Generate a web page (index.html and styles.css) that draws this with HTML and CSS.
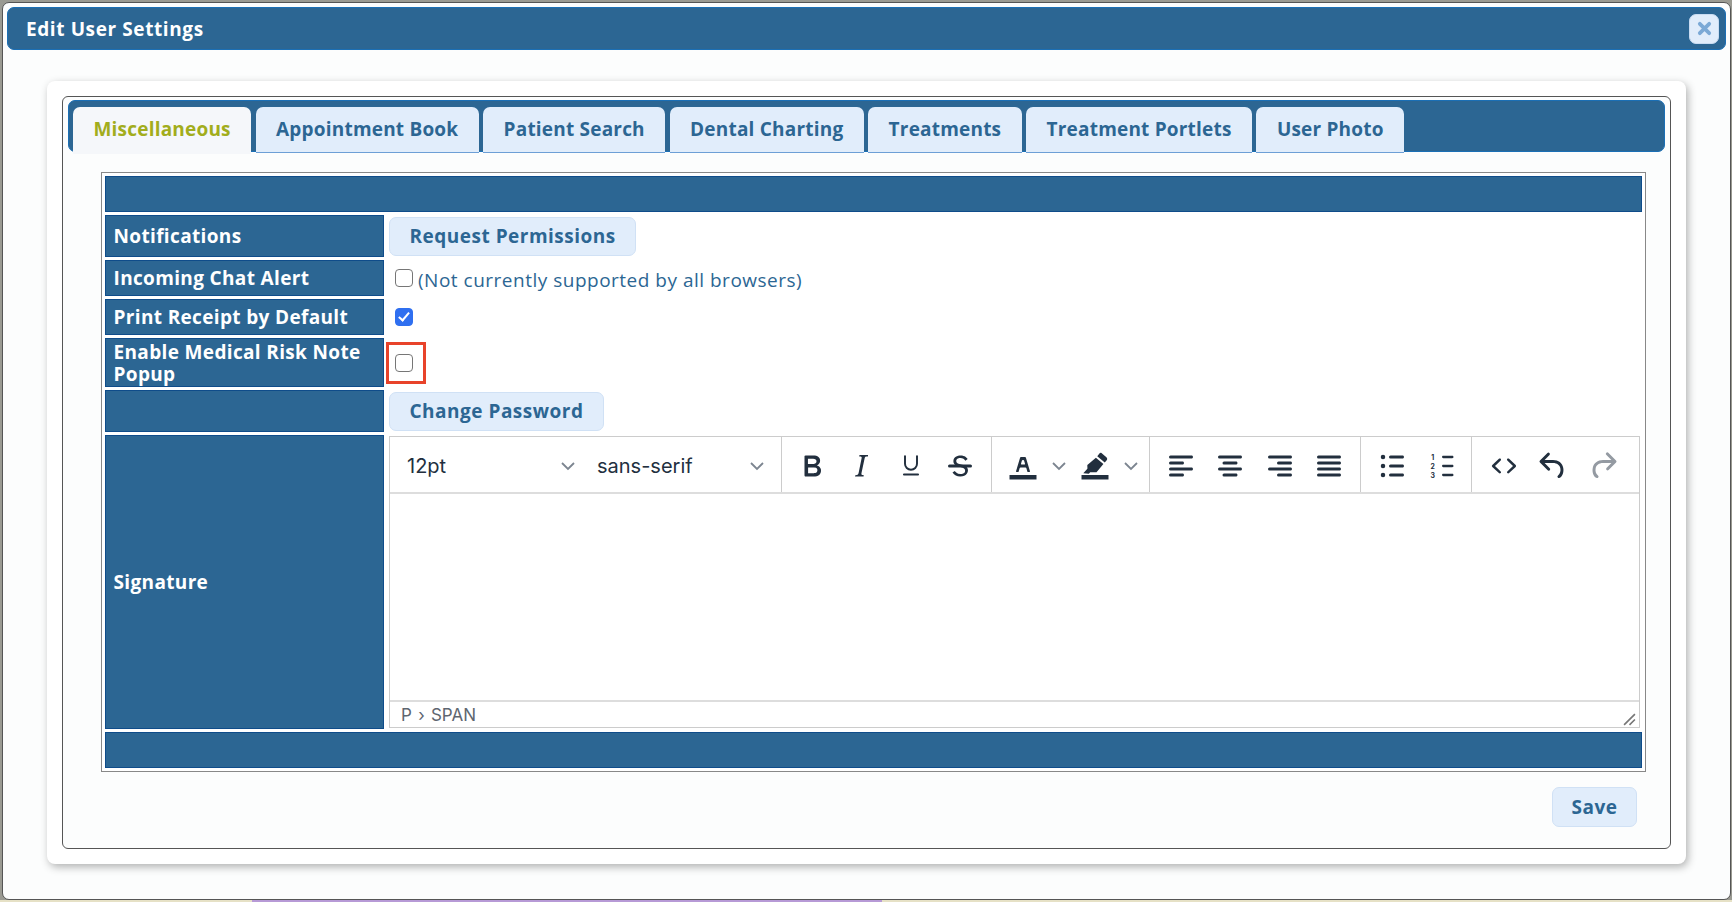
FILE: index.html
```html
<!DOCTYPE html>
<html lang="en">
<head>
<meta charset="utf-8">
<title>Edit User Settings</title>
<link rel="stylesheet" href="styles.css">
</head>
<body>
<div class="dialog">
  <div class="titlebar">
    <span class="title">Edit User Settings</span>
    <button class="close" aria-label="Close"><svg viewBox="0 0 16 16" width="15" height="15"><path d="M3 3l10 10M13 3L3 13" stroke="#7ba9d6" stroke-width="4" stroke-linecap="round"/></svg></button>
  </div>
  <div class="card">
    <div class="fieldset">
      <div class="tabbar">
        <a class="tab active">Miscellaneous</a>
        <a class="tab">Appointment Book</a>
        <a class="tab">Patient Search</a>
        <a class="tab">Dental Charting</a>
        <a class="tab">Treatments</a>
        <a class="tab">Treatment Portlets</a>
        <a class="tab">User Photo</a>
      </div>
      <table class="form">
        <colgroup><col class="col-label"><col></colgroup>
        <tr class="h36"><td class="head" colspan="2"></td></tr>
        <tr class="h42"><th>Notifications</th><td><button class="btn">Request Permissions</button></td></tr>
        <tr class="h36"><th>Incoming Chat Alert</th><td><label class="check"><input type="checkbox"><span class="note">(Not currently supported by all browsers)</span></label></td></tr>
        <tr class="h36"><th>Print Receipt by Default</th><td><label class="check"><input type="checkbox" checked></label></td></tr>
        <tr class="h49"><th>Enable Medical Risk Note Popup</th><td><label class="check marked"><input type="checkbox"></label></td></tr>
        <tr class="h42"><th></th><td><button class="btn">Change Password</button></td></tr>
        <tr class="h294"><th>Signature</th><td class="edcell">
          <div class="editor">
            <div class="toolbar">
              <div class="group g1">
                <div class="drop d1"><span>12pt</span><svg class="chev" viewBox="0 0 16 10"><path d="M2 2l6 6 6-6"/></svg></div>
                <div class="drop d2"><span>sans-serif</span><svg class="chev" viewBox="0 0 16 10"><path d="M2 2l6 6 6-6"/></svg></div>
              </div>
              <div class="group g2">
                <span class="ib"><svg viewBox="0 0 24 24"><path d="M7.8 19c-.3 0-.5 0-.6-.2l-.2-.5V5.7c0-.2 0-.4.2-.5l.6-.2h5c1.5 0 2.7.3 3.5 1 .7.6 1.1 1.4 1.1 2.5a3 3 0 0 1-.6 1.9c-.4.6-1 1-1.6 1.2.4.1.9.3 1.3.6s.8.7 1 1.2c.4.4.5 1 .5 1.6 0 1.3-.4 2.3-1.3 3-.8.7-2.1 1-3.8 1H7.8zm5-8.3c.6 0 1.2-.1 1.6-.5.4-.3.6-.7.6-1.3 0-1.1-.8-1.7-2.3-1.7H9.3v3.5h3.4zm.5 6c.7 0 1.3-.1 1.7-.4.4-.4.6-.9.6-1.5s-.2-1-.7-1.4c-.4-.3-1-.4-2-.4H9.4v3.8h4z" fill-rule="evenodd"/></svg></span>
                <span class="ib"><svg viewBox="0 0 24 24"><path d="M16.7 4.7l-.1.9h-.3c-.6 0-1 0-1.4.3-.3.3-.4.6-.5 1.1l-2.1 9.8v.6c0 .5.4.8 1.4.8h.2l-.2.8H8l.2-.8h.2c1.1 0 1.8-.5 2-1.5l2-9.8.1-.5c0-.6-.4-.8-1.4-.8h-.3l.2-.9h5.8z"/></svg></span>
                <span class="ib"><svg class="outline" viewBox="0 0 24 24"><path d="M8 5.4v5.1a4 4 0 0 0 8 0V5.4M7.3 17.6h9.4"/></svg></span>
                <span class="ib"><svg viewBox="0 0 24 24"><path d="M15.6 8.5c-.5-.7-1-1.1-1.3-1.3-.6-.4-1.3-.6-2-.6-2.7 0-2.8 1.7-2.8 2.1 0 1.6 1.8 2 3.2 2.3 4.4.9 4.6 2.8 4.6 3.9 0 1.4-.7 4.1-5 4.1A6.2 6.2 0 0 1 7 16.4l1.5-1.1c.4.6 1.6 2 3.7 2 1.6 0 2.5-.4 3-1.2.4-.8.3-2-.8-2.6-.7-.4-1.6-.7-2.9-1-1-.2-3.9-.8-3.9-3.6C7.6 6 10.3 5 12.4 5c2.9 0 4.2 1.6 4.7 2.4l-1.5 1.1z"/><path d="M5 11h14a1 1 0 0 1 0 2H5a1 1 0 0 1 0-2z"/></svg></span>
              </div>
              <div class="group g3">
                <span class="ib ic1"><svg viewBox="0 0 24 24"><path d="M3 18h18v3H3z"/><path fill-rule="evenodd" d="M8.7 16h-.8a.5.5 0 0 1-.5-.6l2.7-9c.1-.3.3-.4.5-.4h2.8c.2 0 .4.1.5.4l2.7 9a.5.5 0 0 1-.5.6h-.8a.5.5 0 0 1-.4-.4l-.7-2.2c0-.3-.3-.4-.5-.4h-3.4c-.2 0-.4.1-.5.4l-.7 2.2c0 .3-.2.4-.4.4zm2.6-7.6l-.6 2a.5.5 0 0 0 .5.6h1.6a.5.5 0 0 0 .5-.6l-.6-2c0-.3-.3-.4-.5-.4h-.4c-.2 0-.4.1-.5.4z"/></svg></span>
                <svg class="chev c3" viewBox="0 0 16 10"><path d="M2 2l6 6 6-6"/></svg>
                <span class="ib ic2"><svg viewBox="0 0 24 24"><path d="M3 18h18v3H3z"/><path d="M16.3 3.4l3.3 2.7c.6.5.7 1.4.2 2l-1.3 1.6-5-4.2 1.3-1.6c.5-.6 1-.9 1.5-.5zM12.6 6.5l5 4.2-4.6 5.5-4.2-.1-.9 1-3.7-.2 2.7-3.1c.2-.4-.1-1.6 0-2.5z"/></svg></span>
                <svg class="chev c3" viewBox="0 0 16 10"><path d="M2 2l6 6 6-6"/></svg>
              </div>
              <div class="group g4">
                <span class="ib"><svg viewBox="0 0 24 24"><path d="M5 5h14c.6 0 1 .4 1 1s-.4 1-1 1H5a1 1 0 1 1 0-2zm0 4h8c.6 0 1 .4 1 1s-.4 1-1 1H5a1 1 0 1 1 0-2zm0 8h8c.6 0 1 .4 1 1s-.4 1-1 1H5a1 1 0 0 1 0-2zm0-4h14c.6 0 1 .4 1 1s-.4 1-1 1H5a1 1 0 0 1 0-2z"/></svg></span>
                <span class="ib"><svg viewBox="0 0 24 24"><path d="M5 5h14c.6 0 1 .4 1 1s-.4 1-1 1H5a1 1 0 1 1 0-2zm3 4h8c.6 0 1 .4 1 1s-.4 1-1 1H8a1 1 0 1 1 0-2zm0 8h8c.6 0 1 .4 1 1s-.4 1-1 1H8a1 1 0 0 1 0-2zm-3-4h14c.6 0 1 .4 1 1s-.4 1-1 1H5a1 1 0 0 1 0-2z"/></svg></span>
                <span class="ib"><svg viewBox="0 0 24 24"><path d="M5 5h14c.6 0 1 .4 1 1s-.4 1-1 1H5a1 1 0 1 1 0-2zm6 4h8c.6 0 1 .4 1 1s-.4 1-1 1h-8a1 1 0 0 1 0-2zm0 8h8c.6 0 1 .4 1 1s-.4 1-1 1h-8a1 1 0 0 1 0-2zm-6-4h14c.6 0 1 .4 1 1s-.4 1-1 1H5a1 1 0 0 1 0-2z"/></svg></span>
                <span class="ib"><svg viewBox="0 0 24 24"><path d="M5 5h14c.6 0 1 .4 1 1s-.4 1-1 1H5a1 1 0 1 1 0-2zm0 4h14c.6 0 1 .4 1 1s-.4 1-1 1H5a1 1 0 1 1 0-2zm0 4h14c.6 0 1 .4 1 1s-.4 1-1 1H5a1 1 0 0 1 0-2zm0 4h14c.6 0 1 .4 1 1s-.4 1-1 1H5a1 1 0 0 1 0-2z"/></svg></span>
              </div>
              <div class="group g5">
                <span class="ib"><svg viewBox="0 0 24 24"><path d="M11 5h8c.6 0 1 .4 1 1s-.4 1-1 1h-8a1 1 0 0 1 0-2zm0 6h8c.6 0 1 .4 1 1s-.4 1-1 1h-8a1 1 0 0 1 0-2zm0 6h8c.6 0 1 .4 1 1s-.4 1-1 1h-8a1 1 0 0 1 0-2z"/><circle cx="6" cy="6" r="1.5"/><circle cx="6" cy="12" r="1.5"/><circle cx="6" cy="18" r="1.5"/></svg></span>
                <span class="ib"><svg viewBox="0 0 24 24"><path d="M13.5 17.2h6c.5 0 .8.3.8.8s-.3.8-.8.8h-6c-.5 0-.8-.3-.8-.8s.3-.8.8-.8zm0-6h6c.5 0 .8.3.8.8s-.3.8-.8.8h-6c-.5 0-.8-.3-.8-.8s.3-.8.8-.8zm0-6h6c.5 0 .8.3.8.8s-.3.8-.8.8h-6c-.5 0-.8-.3-.8-.8s.3-.8.8-.8z"/><text class="num" x="6.5" y="7.8">1</text><text class="num" x="6.5" y="13.8">2</text><text class="num" x="6.5" y="19.8">3</text></svg></span>
              </div>
              <div class="group g6">
                <span class="ib"><svg viewBox="0 0 24 24"><path d="M9.8 15.7c.3.3.3.8 0 1-.3.4-.9.4-1.2 0l-4.4-4.1a.8.8 0 0 1 0-1.2l4.4-4.2c.3-.3.9-.3 1.2 0 .3.3.3.8 0 1.1L6 12l3.8 3.7zM14.2 15.7L18 12l-3.8-3.7a.8.8 0 0 1 0-1.1c.3-.3.9-.3 1.2 0l4.4 4.2c.3.3.3.9 0 1.2l-4.4 4.1c-.3.4-.9.4-1.2 0a.8.8 0 0 1 0-1z"/></svg></span>
                <span class="ib"><svg viewBox="0 0 24 24"><path d="M6.4 8H12c3.7 0 6.2 2 6.8 5.1.6 2.7-.4 5.6-2.3 6.8a1 1 0 0 1-1-1.8c1.1-.7 1.8-2.7 1.4-4.6-.5-2.1-2.1-3.5-4.9-3.5H6.4l3.3 3.3a1 1 0 1 1-1.4 1.4l-5-5a1 1 0 0 1 0-1.4l5-5a1 1 0 0 1 1.4 1.4L6.4 8z"/></svg></span>
                <span class="ib"><svg class="muted" viewBox="0 0 24 24"><path d="M17.6 10H12c-2.8 0-4.4 1.4-4.9 3.5-.4 2 .3 3.9 1.4 4.6a1 1 0 1 1-1 1.8c-2-1.2-2.9-4.1-2.3-6.8.6-3 3.2-5.1 6.8-5.1h5.6l-3.3-3.3a1 1 0 1 1 1.4-1.4l5 5a1 1 0 0 1 0 1.4l-5 5a1 1 0 0 1-1.4-1.4l3.3-3.3z"/></svg></span>
              </div>
            </div>
            <div class="edit-area"></div>
            <div class="status"><span>P › SPAN</span><svg class="grip" viewBox="0 0 12 12"><path d="M11 1L1 11M11 6l-5 5"/></svg></div>
          </div>
        </td></tr>
        <tr class="h36"><td class="head" colspan="2"></td></tr>
      </table>
      <div class="actions"><button class="btn save">Save</button></div>
    </div>
  </div>
</div>
</body>
</html>
```
FILE: styles.css
```css
*, *::before, *::after { box-sizing: border-box; }
html, body { height: 100%; }
body {
  margin: 0;
  padding: 2px 1px 2px 2px;
  overflow: hidden;
  background-color: #9a9a92;
  background-image: linear-gradient(90deg, #e6e1c6 0 252px, #b79ad6 252px 882px, #e6e1c6 882px);
  background-size: 100% 2px;
  background-position: 0 100%;
  background-repeat: no-repeat;
  font-family: "Open Sans", "Liberation Sans", sans-serif;
  color: #2c6693;
}
.dialog {
  height: 898px;
  padding: 4px 4px 0 4px;
  background: #fcfdfd;
  border: 1px solid #555;
  border-radius: 7px;
}
.titlebar {
  height: 43px;
  margin-bottom: 31px;
  padding: 0 6px 0 18px;
  display: flex;
  align-items: center;
  justify-content: space-between;
  background: #2c6693;
  border: 1px solid #1b6fb5;
  border-radius: 7px;
}
.title { font-size: 19px; font-weight: 700; color: #fff; letter-spacing: .6px; }
.close {
  width: 30px;
  height: 30px;
  padding: 0;
  display: flex;
  align-items: center;
  justify-content: center;
  background: #e1edfb;
  border: 1px solid #c9dcf2;
  border-radius: 7px;
}
.card {
  width: 1639px;
  height: 783px;
  margin-left: 40px;
  padding: 15px;
  background: #fff;
  border-radius: 8px;
  box-shadow: 2px 3px 9px rgba(0, 0, 0, .3);
}
.fieldset {
  height: 753px;
  padding: 3px 5px 0;
  background: #fcfdfd;
  border: 1px solid #555;
  border-radius: 6px;
}
.tabbar {
  height: 52px;
  padding: 6px 0 0 4px;
  display: flex;
  gap: 4.3px;
  background: #2c6693;
  border: 1px solid #1b6fb5;
  border-radius: 7px;
}
.tab {
  height: 46px;
  padding: 1px 20.5px 2px;
  display: flex;
  align-items: center;
  font-size: 19px;
  font-weight: 700;
  letter-spacing: .2px;
  background: #e1edfb;
  border-bottom: 1px solid #6d9fd6;
  border-radius: 7px 7px 0 0;
  white-space: nowrap;
}
.tab.active { height: 47px; padding-top: 1px; padding-bottom: 4px; color: #a2ad1c; background: #f5f7fa; border-bottom: 0; }
.form {
  width: 1545px;
  margin: 20px 0 0 33px;
  border-collapse: separate;
  border-spacing: 3px;
  border: 1px solid #888;
  background: #fff;
  table-layout: fixed;
}
.col-label { width: 279px; }
.form td, .form th { padding: 0; }
.form th, .form .head {
  background: #2c6693;
  border: 1px solid #0f4c8a;
}
.form th {
  padding: 0 8px 0 7.5px;
  text-align: left;
  color: #fff;
  font-size: 19px;
  line-height: 22px;
  font-weight: 700;
  letter-spacing: .35px;
}
.form td { padding-left: 2px; }
.form .head { padding: 0; }
.h36 { height: 36px; }
.h42 { height: 42px; }
.h49 { height: 49px; }
.h294 { height: 294px; }
.btn {
  height: 39px;
  padding: 0 19.5px;
  font: 700 19px "Open Sans", "Liberation Sans", sans-serif;
  letter-spacing: .5px;
  color: #2c6693;
  background: #e1edfb;
  border: 1px solid #d0e1f5;
  border-radius: 7px;
  vertical-align: middle;
}
.check {
  position: relative;
  display: flex;
  align-items: center;
  gap: 5px;
  margin-left: 6px;
}
.check input {
  appearance: none;
  position: relative;
  flex: none;
  width: 18px;
  height: 18px;
  margin: 0;
  background: #fff;
  border: 1.5px solid #767676;
  border-radius: 4px;
}
.check input:checked { background: #2f6ff0; border-color: #2f6ff0; }
.check input:checked::after {
  content: "";
  position: absolute;
  left: 4.5px;
  top: 1px;
  width: 6px;
  height: 11px;
  border: solid #fff;
  border-width: 0 2.2px 2.2px 0;
  transform: rotate(40deg);
}
.marked::after {
  content: "";
  position: absolute;
  left: -9px;
  top: -12px;
  width: 40px;
  height: 42px;
  border: 3px solid #e8432a;
}
.note { font-size: 19px; letter-spacing: .5px; padding-top: 4px; }
.edcell { vertical-align: top; }
.form .edcell { padding: 1px 2px 0 2px; }
.editor {
  height: 292px;
  display: flex;
  flex-direction: column;
  background: #fff;
  border: 1px solid #ccc;
  font-family: Inter, "Liberation Sans", sans-serif;
  color: #222f3e;
}
.toolbar {
  height: 57px;
  flex: none;
  display: flex;
  align-items: stretch;
  border-bottom: 2px solid #ddd;
}
.group { display: flex; flex: none; align-items: center; padding-top: 3px; border-right: 1px solid #ccc; }
.g1 { width: 392px; }
.g2 { width: 210px; padding-left: 5px; }
.g3 { width: 158px; padding-left: 8px; }
.g4 { width: 211px; padding-left: 6px; }
.g5 { width: 111px; padding-left: 6px; }
.g6 { flex: 1; padding-left: 7px; border-right: 0; }
.drop {
  display: flex;
  align-items: center;
  justify-content: space-between;
  font-size: 20px;
}
.d1 { width: 186px; padding: 0 0 0 17px; }
.d2 { width: 192px; padding: 0 3px 0 21px; }
.chev { width: 16px; height: 10px; flex: none; fill: none; stroke: #7c8590; stroke-width: 1.8; }
.c3 { margin: 0 5px; }
.ib { width: 49.5px; display: flex; justify-content: center; flex: none; }
.ib svg { width: 36px; height: 36px; fill: #222f3e; }
.ib svg.outline { fill: none; stroke: #222f3e; stroke-width: 1.3; stroke-linecap: round; }
.ib svg.muted { fill: #949aa2; }
.ic1, .ic2 { width: 46px; }
.num { font: 700 4.6px Inter, sans-serif; text-anchor: middle; }
.edit-area { flex: 1; }
.status {
  height: 27px;
  flex: none;
  padding: 1px 3px 0 11px;
  display: flex;
  align-items: center;
  justify-content: space-between;
  border-top: 2px solid #ddd;
  font-size: 17px;
  word-spacing: 1.5px;
  color: #5e6670;
}
.grip { width: 13px; height: 13px; align-self: flex-end; margin-bottom: 1px; fill: none; stroke: #777; stroke-width: 1.5; }
.actions { display: flex; justify-content: flex-end; padding: 15px 28px 0 0; }
.save { width: 85px; height: 40px; padding: 0; }
```
